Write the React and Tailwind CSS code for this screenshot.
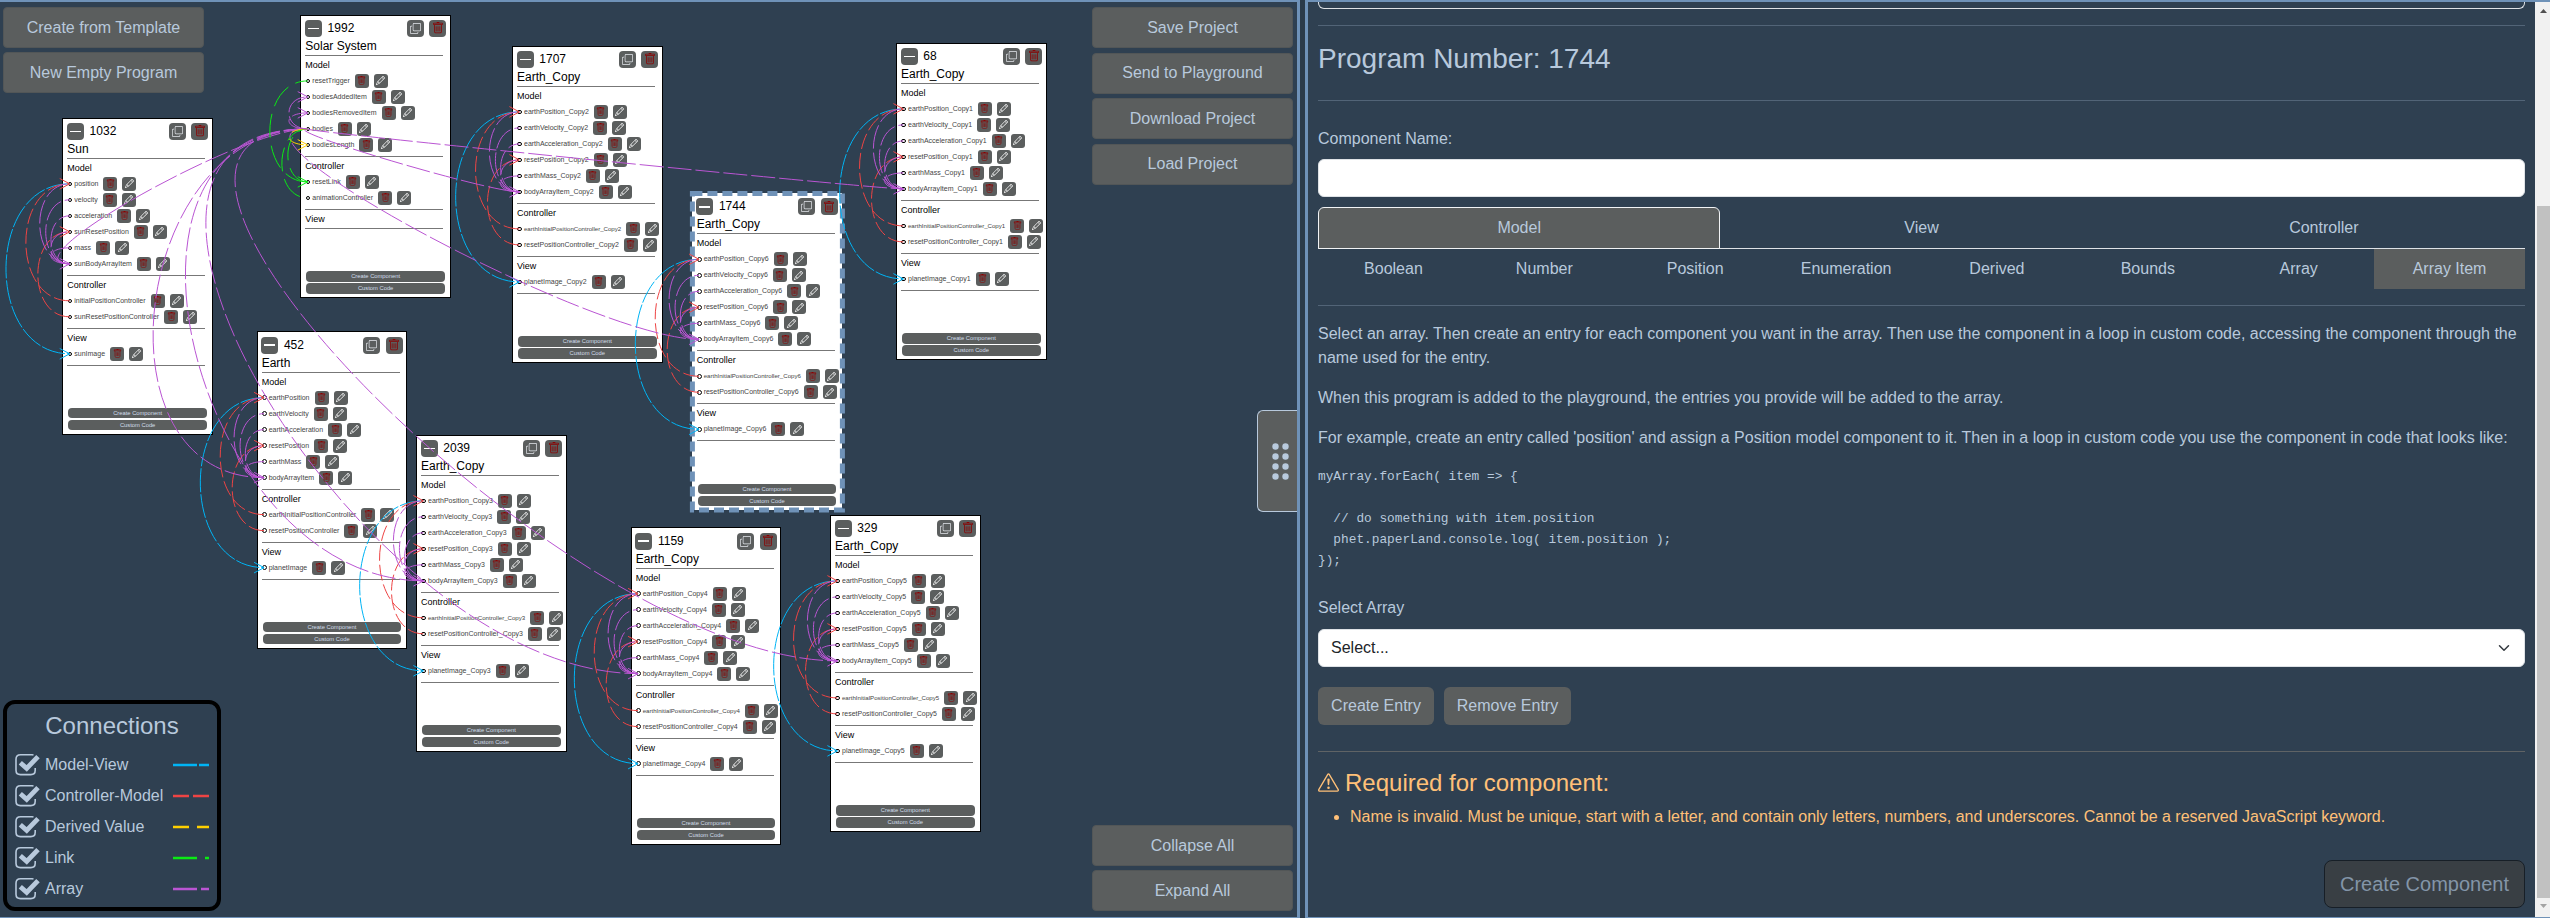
import React from "react";
import { BsTrash, BsPencil, BsCopy, BsExclamationTriangle } from "react-icons/bs";

const earthCard = (id, name, x, y, suffix, extra = {}) => ({
  id,
  name,
  x,
  y,
  model: ["earthPosition", "earthVelocity", "earthAcceleration", "resetPosition", "earthMass", "bodyArrayItem"].map(
    (n) => n + suffix
  ),
  controller: ["earthInitialPositionController" + suffix, "resetPositionController" + suffix],
  view: ["planetImage" + suffix],
  ...extra,
});

const CARDS = [
  {
    id: "1032",
    name: "Sun",
    x: 62.33,
    y: 117.5,
    model: ["position", "velocity", "acceleration", "sunResetPosition", "mass", "sunBodyArrayItem"],
    controller: ["initialPositionController", "sunResetPositionController"],
    view: ["sunImage"],
  },
  {
    id: "1992",
    name: "Solar System",
    x: 300.33,
    y: 14.6,
    model: ["resetTrigger", "bodiesAddedItem", "bodiesRemovedItem", "bodies", "bodiesLength"],
    controller: ["resetLink", "animationController"],
    view: [],
  },
  earthCard("452", "Earth", 256.67, 331.33, ""),
  earthCard("2039", "Earth_Copy", 416, 434.5, "_Copy3"),
  earthCard("1707", "Earth_Copy", 512, 45.6, "_Copy2"),
  earthCard("1159", "Earth_Copy", 630.67, 527.33, "_Copy4"),
  earthCard("1744", "Earth_Copy", 691.67, 193, "_Copy6", { selected: true }),
  earthCard("329", "Earth_Copy", 830, 514.6, "_Copy5"),
  earthCard("68", "Earth_Copy", 896, 42.6, "_Copy1"),
];

const LINKS = {
  modelView: { color: "#00b4f5", dash: "24 2" },
  controllerModel: { color: "#ee4444", dash: "16 4" },
  derived: { color: "#ffd000", dash: "16 8" },
  link: { color: "#0bea14", dash: "24 8" },
  array: { color: "#ba55d3", dash: "24 4" },
};

const modelPoint = (card, row) => [card.x + 7.4, card.y + 66.3 + row * 16];
const controllerPoint = (card, row) => [card.x + 7.4, card.y + 87.3 + (card.model.length + row) * 16];
const viewPoint = (card) => [card.x + 7.4, card.y + 108.3 + (card.model.length + card.controller.length) * 16];

function buildConnections() {
  const out = [];
  const add = (type, from, to, headAt) => out.push({ type, from, to, headAt });
  const solar = CARDS[1];
  const bodies = modelPoint(solar, 3);
  CARDS.forEach((c) => {
    if (c === solar) return;
    const item = modelPoint(c, 5);
    add("modelView", modelPoint(c, 0), viewPoint(c), viewPoint(c));
    add("controllerModel", controllerPoint(c, 0), modelPoint(c, 0), modelPoint(c, 0));
    add("controllerModel", controllerPoint(c, 1), modelPoint(c, 3), modelPoint(c, 3));
    [0, 1, 2, 3, 4].forEach((i) => add("array", item, modelPoint(c, i), i === 0 ? item : null));
    add("array", bodies, item, null);
  });
  const resetLink = controllerPoint(solar, 0);
  add("link", resetLink, modelPoint(solar, 0), resetLink);
  add("link", resetLink, bodies, null);
  add("link", bodies, controllerPoint(solar, 1), null);
  add("derived", bodies, modelPoint(solar, 4), modelPoint(solar, 4));
  add("array", bodies, modelPoint(solar, 1), modelPoint(solar, 1));
  add("array", bodies, modelPoint(solar, 2), modelPoint(solar, 2));
  return out;
}

function Connections() {
  return (
    <svg className="pointer-events-none absolute left-0 top-0" width="1297" height="916" viewBox="0 2 1297 916" fill="none">
      {buildConnections().map((c, i) => {
        const [x1, y1] = c.from;
        const [x2, y2] = c.to;
        const d = Math.max(Math.abs(y2 - y1) / 2, 25);
        const style = LINKS[c.type];
        return (
          <g key={i} stroke={style.color} strokeWidth="1">
            <path d={`M${x1} ${y1}C${x1 - d} ${y1} ${x2 - d} ${y2} ${x2} ${y2}`} strokeDasharray={style.dash} />
            {c.headAt && (
              <path d={`M${c.headAt[0] - 10} ${c.headAt[1] - 5.3}L${c.headAt[0]} ${c.headAt[1]}L${c.headAt[0] - 10} ${c.headAt[1] + 5.3}`} />
            )}
          </g>
        );
      })}
    </svg>
  );
}

function Row({ label }) {
  const long = label.length > 33;
  return (
    <div className="flex h-4 items-center pl-[5.4px]">
      <span className="h-[4.6px] w-[4.6px] shrink-0 rounded-full border border-black" />
      <span
        className={
          long
            ? "ml-[2px] mr-[5px] whitespace-nowrap text-[6.1px] leading-4 text-[#444]"
            : "ml-[2px] mr-[5px] whitespace-nowrap text-[7px] leading-4 text-[#444]"
        }
      >
        {label}
      </span>
      <span className="mr-[5px] flex h-[14px] w-[14px] shrink-0 items-center justify-center rounded-[3px] bg-[#5b5e5e]">
        <BsTrash className="h-[9px] w-[9px] text-[#8b0000]" />
      </span>
      <span className="flex h-[14px] w-[14px] shrink-0 items-center justify-center rounded-[3px] bg-[#5b5e5e]">
        <BsPencil className="h-[9px] w-[9px] text-white" />
      </span>
    </div>
  );
}

function Section({ title, rows }) {
  return (
    <div className="flex flex-col">
      <div className="h-[17px] pl-[5px] text-[9px] leading-[18px]">{title}</div>
      {rows.map((r) => (
        <Row key={r} label={r} />
      ))}
      <div className={rows.length ? "ml-[5px] mt-[3px] h-px w-[138px] bg-[#777]" : "ml-[5px] mt-px h-px w-[138px] bg-[#777]"} />
    </div>
  );
}

function Card({ card }) {
  return (
    <div
      className={
        card.selected
          ? "absolute flex w-[150.6px] flex-col bg-white pb-[4.4px] text-black"
          : "absolute flex w-[150.6px] flex-col bg-white pb-[4.4px] text-black outline outline-1 -outline-offset-1 outline-black"
      }
      style={{ left: card.x, top: card.y - 2 }}
    >
      <div className="flex items-center pl-[4.7px] pr-[4.5px] pt-[5.3px]">
        <span className="flex h-[17px] w-[17px] items-center justify-center rounded-[4px] bg-[#5b5e5e]">
          <span className="h-[1.6px] w-[11px] bg-white" />
        </span>
        <span className="ml-[5.6px] grow text-[12px] leading-[17px]">{card.id}</span>
        <span className="mr-[5.3px] flex h-[17px] w-[17px] items-center justify-center rounded-[4px] bg-[#5b5e5e]">
          <BsCopy className="h-[11px] w-[11px] text-[#e6e9ee]" />
        </span>
        <span className="flex h-[17px] w-[17px] items-center justify-center rounded-[4px] bg-[#5b5e5e]">
          <BsTrash className="h-[12px] w-[12px] text-[#8b0000]" />
        </span>
      </div>
      <div className="h-[18px] pl-[5px] text-[12px] leading-[18px]">{card.name}</div>
      <div className="ml-[5px] h-px w-[138px] bg-[#777]" />
      <Section title="Model" rows={card.model} />
      <Section title="Controller" rows={card.controller} />
      <Section title="View" rows={card.view} />
      <div className="mx-[6px] mt-[42.3px] flex flex-col gap-[1.6px] text-center text-[5.8px] leading-[10.4px] text-[#d3deeb]">
        <div className="h-[10.4px] rounded-[4px] bg-[#5b5e5e]">Create Component</div>
        <div className="h-[10.4px] rounded-[4px] bg-[#5b5e5e]">Custom Code</div>
      </div>
      {card.selected && (
        <svg className="absolute -left-[3px] -top-[3px]" width="157" height="324" fill="none">
          <rect x="3.4" y="3.4" width="150" height="316.6" stroke="#6f92b8" strokeWidth="5" strokeDasharray="10 5" />
        </svg>
      )}
    </div>
  );
}

function LegendRow({ label, type }) {
  return (
    <div className="flex h-[31px] items-center">
      <svg width="26" height="24" viewBox="0 0 26 24" fill="none" className="shrink-0 text-[#b8c9dc]">
        <path d="M18.5 2Q17.8 1.8 17 1.8H5.5Q1 1.8 1 6.2V17.2Q1 21.6 5.5 21.6H15.8Q20.2 21.6 20.2 17.2V15" stroke="currentColor" strokeWidth="1.6" />
        <path d="M5.3 9.8L11.7 15.4L23 3.6" stroke="currentColor" strokeWidth="4.8" />
      </svg>
      <span className="ml-1 grow whitespace-nowrap">{label}</span>
      <svg width="36" height="4" className="shrink-0">
        <path d="M0 2H36" stroke={LINKS[type].color} strokeWidth="2.4" strokeDasharray={LINKS[type].dash} />
      </svg>
    </div>
  );
}

function Legend() {
  return (
    <div className="flex h-[211px] w-[218px] flex-col rounded-[12px] border-4 border-black bg-[#2f4051] pl-2 pr-2 pt-[6px]">
      <div className="h-[39px] text-center text-[24px] leading-[32px]">Connections</div>
      <LegendRow label="Model-View" type="modelView" />
      <LegendRow label="Controller-Model" type="controllerModel" />
      <LegendRow label="Derived Value" type="derived" />
      <LegendRow label="Link" type="link" />
      <LegendRow label="Array" type="array" />
    </div>
  );
}

function CanvasButton({ children }) {
  return (
    <button className="flex h-[41px] w-[201px] shrink-0 items-center justify-center rounded-[4px] border border-[#525657] bg-[#5b5e5e]">
      {children}
    </button>
  );
}

function CanvasPanel() {
  return (
    <section className="relative h-[918px] w-[1300px] shrink-0 overflow-hidden border-b border-r-[3px] border-t-2 border-[#6f92b8]">
      {CARDS.map((c) => (
        <Card key={c.id} card={c} />
      ))}
      <Connections />
      <div className="absolute inset-0 flex justify-between pl-[3px] pr-[4px] pt-[5px]">
        <div className="flex flex-col justify-between pb-[6px]">
          <div className="flex flex-col gap-1">
            <CanvasButton>Create from Template</CanvasButton>
            <CanvasButton>New Empty Program</CanvasButton>
          </div>
          <Legend />
        </div>
        <div className="flex flex-col justify-between pb-[6px]">
          <div className="flex flex-col gap-[4.5px]">
            <CanvasButton>Save Project</CanvasButton>
            <CanvasButton>Send to Playground</CanvasButton>
            <CanvasButton>Download Project</CanvasButton>
            <CanvasButton>Load Project</CanvasButton>
          </div>
          <div className="flex flex-col gap-1">
            <CanvasButton>Collapse All</CanvasButton>
            <CanvasButton>Expand All</CanvasButton>
          </div>
        </div>
      </div>
      <div className="absolute right-0 top-[408px] flex h-[102px] w-[40px] items-center justify-center rounded-l-[6px] border border-r-0 border-[#b8c9dc] bg-[#5b5e5e] pl-[5px]">
        <svg width="17" height="37" viewBox="0 0 17 37" fill="#b8c9dc">
          {[3.5, 13.5, 23.5, 33.5].map((y) => (
            <g key={y}>
              <circle cx="3.5" cy={y} r="3.2" />
              <circle cx="13.5" cy={y} r="3.2" />
            </g>
          ))}
        </svg>
      </div>
    </section>
  );
}

const Rule = ({ className }) => <div className={"h-px shrink-0 " + className} />;

function EditorPanel() {
  const types = ["Boolean", "Number", "Position", "Enumeration", "Derived", "Bounds", "Array"];
  return (
    <section className="flex h-[918px] grow border-b border-l-[3px] border-t-2 border-[#6f92b8]">
      <div className="flex grow flex-col px-[10px]">
        <div className="h-[7px] shrink-0 rounded-b-[6px] border border-t-0 border-[#dee2e6]" />
        <Rule className="mt-4 bg-[#526477]" />
        <h2 className="h-[74px] text-[28px] leading-[65px]">Program Number: 1744</h2>
        <Rule className="bg-[#526477]" />
        <label className="h-[58px] leading-[75px]">Component Name:</label>
        <div className="h-[38px] rounded-[6px] border border-[#dee2e6] bg-white" />
        <div className="mt-[10px] grid h-[42px] grid-cols-3 border-b border-[#dee2e6] text-center leading-[41px]">
          <div className="-mb-px rounded-t-[6px] border border-[#f1f3f5] bg-[#5b5e5e] leading-[40px]">Model</div>
          <div>View</div>
          <div>Controller</div>
        </div>
        <div className="grid h-[40px] grid-cols-8 text-center leading-[39px]">
          {types.map((t) => (
            <div key={t}>{t}</div>
          ))}
          <div className="bg-[#5b5e5e]">Array Item</div>
        </div>
        <Rule className="mt-4 bg-[#526477]" />
        <p className="mb-4 mt-4">
          Select an array. Then create an entry for each component you want in the array. Then use the component in a loop in
          custom code, accessing the component through the name used for the entry.
        </p>
        <p className="mb-4">When this program is added to the playground, the entries you provide will be added to the array.</p>
        <p className="mb-4 whitespace-nowrap">
          For example, create an entry called 'position' and assign a Position model component to it. Then in a loop in custom
          code you use the component in code that looks like:
        </p>
        <pre className="h-[105px] font-['Liberation_Mono',monospace] text-[12.8px] leading-[21px]">
          {"myArray.forEach( item => {\n\n  // do something with item.position\n  phet.paperLand.console.log( item.position );\n});"}
        </pre>
        <label className="mb-[9px] mt-[25px] h-6">Select Array</label>
        <div className="flex h-[38px] items-center justify-between rounded-[6px] border border-[#dee2e6] bg-white pl-3 pr-[12px] text-[#212529]">
          <span>Select...</span>
          <svg width="16" height="12" viewBox="0 0 16 16" fill="none" stroke="#343a40" strokeWidth="2" strokeLinecap="round" strokeLinejoin="round">
            <path d="m2 5 6 6 6-6" />
          </svg>
        </div>
        <div className="mt-5 flex gap-[10px]">
          <button className="h-[38px] w-[116px] rounded-[6px] bg-[#5b5e5e]">Create Entry</button>
          <button className="h-[38px] w-[127px] rounded-[6px] bg-[#5b5e5e]">Remove Entry</button>
        </div>
        <Rule className="mt-[26px] bg-[#5f6365]" />
        <div className="mt-4 flex h-[29px] items-center text-[24px] leading-[29px] text-[#ffc078]">
          <BsExclamationTriangle className="mr-[6px] h-[21px] w-[21px]" />
          Required for component:
        </div>
        <ul className="mt-2 list-disc pl-8 text-[#ffc078]">
          <li>
            Name is invalid. Must be unique, start with a letter, and contain only letters, numbers, and underscores. Cannot be a
            reserved JavaScript keyword.
          </li>
        </ul>
        <div className="mt-[31px] flex justify-end">
          <button className="h-[48px] w-[201px] rounded-[8px] border border-[#171f27] bg-[#393f44] text-[20px] text-[#8395a8]">
            Create Component
          </button>
        </div>
      </div>
      <div className="flex w-[15px] shrink-0 flex-col items-end bg-[#f1f1f1]">
        <div className="flex h-[204px] w-full items-start justify-center pl-[2px] pt-[7px]">
          <svg width="7" height="4">
            <path d="M0 4L3.5 0L7 4Z" fill="#505050" />
          </svg>
        </div>
        <div className="h-[692px] w-[13px] bg-[#c1c1c1]" />
        <div className="flex w-full grow justify-center pl-[2px] pt-[6px]">
          <svg width="7" height="4">
            <path d="M0 0L3.5 4L7 0Z" fill="#a3a3a3" />
          </svg>
        </div>
      </div>
    </section>
  );
}

export default function App() {
  return (
    <div className="flex h-[918px] w-[2550px] overflow-hidden bg-[#2f4051] font-['Liberation_Sans',Arial,sans-serif] text-[16px] leading-6 text-[#b8c9dc]">
      <CanvasPanel />
      <div className="w-[5px] shrink-0 bg-[#2b3b4a]" />
      <EditorPanel />
    </div>
  );
}
